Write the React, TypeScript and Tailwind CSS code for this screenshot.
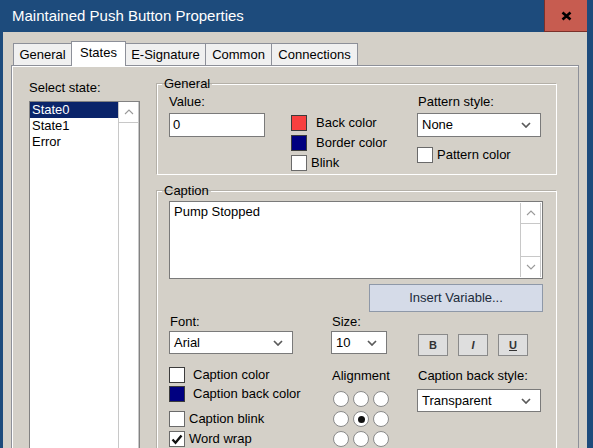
import type { ReactNode } from 'react'

const TABS = [
  { label: 'General', w: 'w-[59px]' },
  { label: 'States', w: 'w-[55px]', active: true },
  { label: 'E-Signature', w: 'w-[81px]' },
  { label: 'Common', w: 'w-[67px]' },
  { label: 'Connections', w: 'w-[87px]' },
]

function Chevron() {
  return (
    <svg width="10" height="6" viewBox="0 0 10 6">
      <path d="M1 1l4 4 4-4" fill="none" stroke="#5a5a5a" strokeWidth="1.7" />
    </svg>
  )
}

function Caret({ up }: { up?: boolean }) {
  return (
    <svg width="10" height="6" viewBox="0 0 10 6">
      <path d={up ? 'M1 5l4-4 4 4' : 'M1 1l4 4 4-4'} fill="none" stroke="#9a9a9a" strokeWidth="1.1" />
    </svg>
  )
}

function Select({ value, className }: { value: string; className: string }) {
  return (
    <div
      className={`flex items-center justify-between border border-[#7a7a7a] bg-white pl-[4px] pr-[9px] text-[13px] text-black ${className}`}
    >
      <span>{value}</span>
      <Chevron />
    </div>
  )
}

function Swatch({ color, children, gap }: { color: string; children: ReactNode; gap: string }) {
  return (
    <div className="flex h-[16px] items-center whitespace-nowrap">
      <span className={`h-[16px] w-[16px] shrink-0 border border-[#3c3c3c] ${color}`} />
      <span className={gap}>{children}</span>
    </div>
  )
}

function Check({ checked, children }: { checked?: boolean; children: ReactNode }) {
  return (
    <div className="flex h-[16px] items-center whitespace-nowrap">
      <span className="flex h-[16px] w-[16px] shrink-0 items-center justify-center border border-[#6a6a6a] bg-white">
        {checked && (
          <svg width="12" height="11" viewBox="0 0 12 11">
            <path d="M1.5 5.5l3 3.2L10.5 1.5" fill="none" stroke="#111" strokeWidth="2.4" />
          </svg>
        )}
      </span>
      <span className="ml-[4px]">{children}</span>
    </div>
  )
}

function Radio({ on }: { on?: boolean }) {
  return (
    <span className="flex h-[16px] w-[16px] items-center justify-center rounded-full border border-[#8a8a8a] bg-white">
      {on && <span className="h-[7px] w-[7px] rounded-full bg-[#111]" />}
    </span>
  )
}

function StyleButton({ children, className }: { children: ReactNode; className: string }) {
  return (
    <div
      className={`flex h-[22px] w-[30px] items-center justify-center border border-[#8a8a8a] bg-[#dedede] text-[11px] font-bold text-[#333] ${className}`}
    >
      {children}
    </div>
  )
}

export default function App() {
  return (
    <div className="flex h-[448px] w-[593px] flex-col overflow-hidden bg-[#1d4b7c] font-['Liberation_Sans',Arial,sans-serif] text-[13px] leading-[16px] text-black">
      {/* title bar */}
      <div className="flex h-[32px] shrink-0 items-center">
        <span className="pl-[12px] text-[15px] text-white">Maintained Push Button Properties</span>
        <div className="flex-1" />
        <div className="mr-[6px] flex h-[32px] w-[43px] items-center justify-center border-b border-l border-[#7a302a] bg-[#c75c50]">
          <svg width="11" height="10" viewBox="0 0 11 10">
            <path d="M1.5 1.5l8 7M9.5 1.5l-8 7" stroke="#000" strokeWidth="2.6" />
          </svg>
        </div>
      </div>

      {/* dialog body */}
      <div className="ml-[3px] mr-[6px] flex-1 bg-[#d4d0c8] pt-[9px]">
        <div className="flex h-[24px] items-end pl-[10px]">
          {TABS.map((t, i) =>
            t.active ? (
              <div
                key={t.label}
                className={`relative z-10 -mb-px flex h-[25px] items-center justify-center border border-b-0 border-[#8d9099] bg-white pb-[2px] ${t.w} ${i > 0 ? '-ml-px' : ''}`}
              >
                {t.label}
              </div>
            ) : (
              <div
                key={t.label}
                className={`flex h-[22px] items-center justify-center border border-b-0 border-[#8d9099] bg-[#f0f0f0] ${t.w} ${i > 0 ? '-ml-px' : ''}`}
              >
                {t.label}
              </div>
            ),
          )}
        </div>

        {/* tab panel */}
        <div className="ml-[8px] flex h-[400px] w-[568px] gap-[17px] border border-[#8d9099] pl-[17px] shadow-[inset_1px_1px_0_#ffffff]">
          {/* state list */}
          <div className="w-[111px] pt-[14px]">
            <div>Select state:</div>
            <div className="mt-[5px] flex h-[360px] border border-[#828282] bg-white">
              <div className="flex-1">
                <div className="h-[16px] bg-[#0a246a] pl-[2px] text-white">State0</div>
                <div className="h-[16px] pl-[2px]">State1</div>
                <div className="h-[16px] pl-[2px]">Error</div>
              </div>
              <div className="w-[21px] border-x border-[#c8c8c8]">
                <div className="flex h-[21px] items-center justify-center border-b border-[#c8c8c8]">
                  <Caret up />
                </div>
              </div>
            </div>
          </div>

          {/* groups */}
          <div className="w-[400px] pt-[10px]">
            <fieldset className="h-[99px] border border-white p-0 shadow-[-1px_-1px_0_#b4b0a8]">
              <legend className="ml-[4px] px-[2px]">General</legend>
              <div className="flex pl-[11px] pt-[2px]">
                <div className="w-[96px]">
                  <div>Value:</div>
                  <div className="mt-[3px] flex h-[24px] items-center border border-[#7a7a7a] bg-white pl-[3px]">0</div>
                </div>
                <div className="ml-[26px] flex w-[126px] flex-col gap-[4px] pt-[21px]">
                  <Swatch color="bg-[#f84040]" gap="ml-[9px]">Back color</Swatch>
                  <Swatch color="bg-[#000080]" gap="ml-[9px]">Border color</Swatch>
                  <Check>Blink</Check>
                </div>
                <div className="w-[124px]">
                  <div className="pl-[1px]">Pattern style:</div>
                  <Select value="None" className="mt-[3px] h-[24px]" />
                  <div className="mt-[10px]">
                    <Check>Pattern color</Check>
                  </div>
                </div>
              </div>
            </fieldset>

            <fieldset className="mt-[8px] h-[300px] border border-white p-0 shadow-[-1px_-1px_0_#b4b0a8]">
              <legend className="ml-[4px] px-[2px]">Caption</legend>
              <div className="pl-[11px] pt-[2px]">
                <div className="flex h-[78px] w-[374px] border border-[#7a7a7a] bg-white">
                  <div className="flex-1 pl-[4px] pt-[2px]">Pump Stopped</div>
                  <div className="my-px mr-px flex w-[21px] flex-col justify-between border-x border-[#c8c8c8]">
                    <div className="flex h-[21px] items-center justify-center border-b border-[#c8c8c8]">
                      <Caret up />
                    </div>
                    <div className="flex h-[21px] items-center justify-center border-t border-[#c8c8c8]">
                      <Caret />
                    </div>
                  </div>
                </div>
                <div className="mt-[5px] flex w-[374px] justify-end">
                  <div className="flex h-[28px] w-[174px] items-center justify-center border border-[#8e98a8] bg-[#d5dbe8] text-[#202a3a]">
                    Insert Variable...
                  </div>
                </div>

                <div className="mt-[2px] flex">
                  <div className="w-[124px]">
                    <div className="pl-[1px]">Font:</div>
                    <Select value="Arial" className="mt-[1px] h-[23px]" />
                    <div className="mt-[13px]">
                      <Swatch color="bg-white" gap="ml-[8px]">Caption color</Swatch>
                    </div>
                    <div className="mt-[3px]">
                      <Swatch color="bg-[#000080]" gap="ml-[8px]">Caption back color</Swatch>
                    </div>
                    <div className="mt-[9px]">
                      <Check>Caption blink</Check>
                    </div>
                    <div className="mt-[4px]">
                      <Check checked>Word wrap</Check>
                    </div>
                  </div>

                  <div className="ml-[38px] w-[56px]">
                    <div className="pl-[1px]">Size:</div>
                    <Select value="10" className="mt-[1px] h-[23px] pl-[2px]" />
                    <div className="mt-[14px] whitespace-nowrap pl-[1px]">Alignment</div>
                    <div className="ml-[2px] mt-[7px] grid w-[56px] grid-cols-[16px_16px_16px] gap-[4px]">
                      <Radio />
                      <Radio />
                      <Radio />
                      <Radio />
                      <Radio on />
                      <Radio />
                      <Radio />
                      <Radio />
                      <Radio />
                    </div>
                  </div>

                  <div className="ml-[30px] w-[124px] pt-[20px]">
                    <div className="ml-[1px] flex gap-[10px]">
                      <StyleButton className="">B</StyleButton>
                      <StyleButton className="italic">I</StyleButton>
                      <StyleButton className="underline">U</StyleButton>
                    </div>
                    <div className="mt-[12px] whitespace-nowrap pl-[1px]">Caption back style:</div>
                    <Select value="Transparent" className="mt-[5px] h-[23px]" />
                  </div>
                </div>
              </div>
            </fieldset>
          </div>
        </div>
      </div>
    </div>
  )
}
